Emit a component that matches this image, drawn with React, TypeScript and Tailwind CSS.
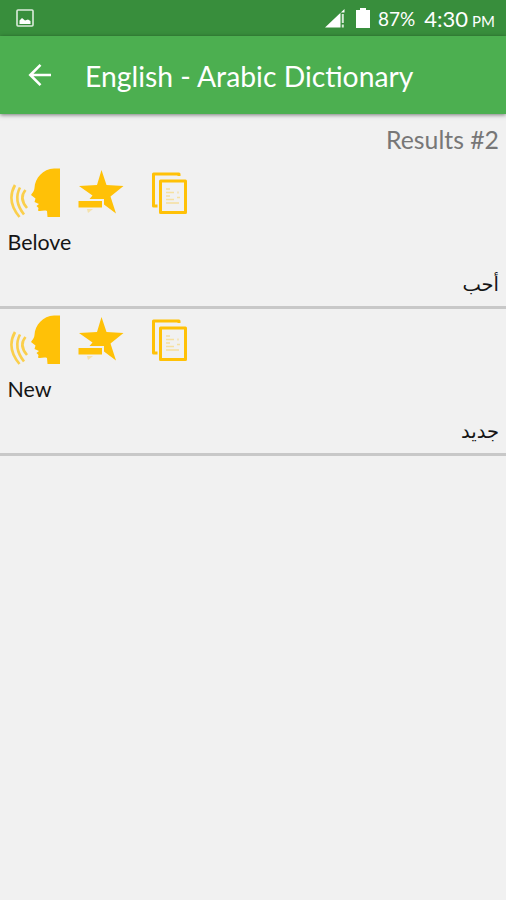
type Entry = { word: string; translation: string };

const entries: Entry[] = [
  { word: "Belove", translation: "أحب" },
  { word: "New", translation: "جديد" },
];

export default function App() {
  return (
    <div className="flex h-[900px] w-[506px] flex-col overflow-hidden bg-[#f1f1f1] font-[Lato,'DejaVu_Sans',sans-serif]">
      <StatusBar />
      <header className="z-10 flex h-[78px] shrink-0 items-center bg-[#4caf50] text-white shadow-[0_1px_4px_rgba(0,0,0,0.5)]">
        <button type="button" aria-label="Back" className="ml-[27px] size-6">
          <BackIcon />
        </button>
        <h1 className="ml-[34px] pt-0.5 text-[28.3px] leading-9 whitespace-nowrap">
          English - Arabic Dictionary
        </h1>
      </header>

      <main>
        <p className="flex h-[48px] items-center justify-end pt-1 pr-[7px] text-[24.8px] text-[#777]">
          Results #2
        </p>
        <ul>
          {entries.map((entry) => (
            <EntryRow key={entry.word} entry={entry} />
          ))}
        </ul>
      </main>
    </div>
  );
}

function StatusBar() {
  return (
    <div className="flex h-9 shrink-0 items-center bg-[#388e3c] text-white">
      <svg viewBox="0 0 18 18" className="ml-4 size-[18px]">
        <rect x="1" y="1" width="16" height="16" rx="1" fill="none" stroke="#dcebdc" strokeWidth="1.6" />
        <path d="M3.500 15v-3.500l2.500-2.500 3 2.500 3-1 2.500 1.500v3z" fill="#fff" />
      </svg>
      <div className="ml-auto flex items-center pt-0.5 pr-[11px]">
        <svg viewBox="0 0 21 20" className="h-5 w-[21px]">
          <path d="M0 18.500 19.500 0v3.500h-4v15z" fill="#fff" />
          <path d="M17.800 5v9M17.800 15.500v3" stroke="#d7ead7" strokeWidth="2" />
        </svg>
        <svg viewBox="0 0 14 20" className="mb-0.5 ml-[10px] h-5 w-[14px]">
          <path d="M4 0h6v2h4v18H0V2h4z" fill="#fff" />
        </svg>
        <span className="ml-2 text-[19px] leading-6">87%</span>
        <span className="ml-[9px] text-[22px] leading-6">4:30</span>
        <span className="ml-1 pt-1 text-[15px] leading-5">PM</span>
      </div>
    </div>
  );
}

function EntryRow({ entry }: { entry: Entry }) {
  return (
    <li className="flex h-[147px] flex-col border-b-[3px] border-[#c8c8c8] text-[21.4px] text-[#151515]">
      <div className="flex h-[62px] items-center pb-px pl-2 text-[#ffc107]">
        <button type="button" aria-label="Speak">
          <SpeakIcon />
        </button>
        <button type="button" aria-label="Remove favourite" className="ml-[18px]">
          <StarIcon />
        </button>
        <button type="button" aria-label="Copy" className="ml-[27px]">
          <CopyIcon />
        </button>
      </div>
      <p className="pt-1 pl-[7.5px] leading-7">{entry.word}</p>
      <p dir="rtl" lang="ar" className="mt-[15px] pr-[7px] text-[19.5px] leading-7 font-['DejaVu_Sans',sans-serif]">
        {entry.translation}
      </p>
    </li>
  );
}

function BackIcon() {
  return (
    <svg viewBox="0 0 24 24" className="size-6" fill="none" stroke="currentColor" strokeWidth="2.6">
      <path d="M24 12H4M13.500 1.800 3.300 12l10.200 10.200" />
    </svg>
  );
}

// Head in profile with sound waves coming from the mouth.
function SpeakIcon() {
  return (
    <svg viewBox="0 0 52 50" className="h-[50px] w-[52px]">
      <path
        d="M52 .5H46C35 1 27 10 26.500 20C26.500 23 24 25 23 27L27.500 30.500L26.500 34L31 36L28.500 38L30.500 40L30 42.500C32 44 36 41.500 39 43L39.500 49H52z"
        fill="currentColor"
      />
      <g fill="none" stroke="currentColor" strokeWidth="2.600" opacity="0.7">
        <path d="M17.500 22q-7 8 1.500 18" />
        <path d="M12 19.500q-7 13 4 27" />
        <path d="M7 17q-9 16 4.500 32" />
      </g>
    </svg>
  );
}

// Star with a minus bar cut into its lower-left point.
function StarIcon() {
  return (
    <svg viewBox="0 0 46 50" className="h-[50px] w-[46px]" fill="currentColor">
      <path d="M23.500 2l5 15L45.500 18 32.500 28.500l5.500 17L26 36.500V31H11.500l3-3.500L1 18l18-1z" />
      <path d="M.5 33h23.500v6.500H.5z" />
      <path d="M9 41h6l-5 4z" opacity="0.3" />
    </svg>
  );
}

function CopyIcon() {
  return (
    <svg viewBox="0 0 36 44" className="h-[44px] w-[36px]" fill="none" stroke="currentColor" strokeLinejoin="round">
      <path d="M28 5V3H2.500v32h4" strokeWidth="3" />
      <rect x="9.500" y="10" width="25" height="31.500" strokeWidth="3" />
      <path
        d="M15 18h4M15 21.500h8M15 25h4M15 28.500h8M15 32h13M27 20.500v2M26 26.500h3"
        strokeWidth="1.300"
        opacity="0.35"
      />
    </svg>
  );
}
